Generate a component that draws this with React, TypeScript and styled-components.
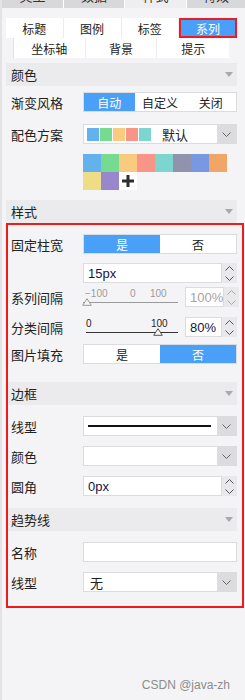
import styled, { createGlobalStyle } from 'styled-components';

const GlobalStyle = createGlobalStyle`
  html, body { margin: 0; padding: 0; background: #f4f4f6; }
  body {
    font-family: "Noto Sans CJK SC", "Liberation Sans", sans-serif;
    color: #222;
  }
`;

const BLUE = '#4a9ff9';

// Outer panel with the thin grey rail on the left
const Page = styled.div`
  width: 245px;
  height: 700px;
  box-sizing: border-box;
  border-left: 2px solid #e3e3e6;
  background: #f4f4f6;
  display: flex;
  flex-direction: column;
  overflow: hidden;
`;

// Top tab strip, only its bottom edge is visible
const TopTabs = styled.div`
  display: grid;
  grid-template-columns: 61px 60px 61px 1fr;
  gap: 1px;
  height: 8px;
  background: #fff;
`;

const TopTab = styled.div<{ $active?: boolean }>`
  background: ${p => (p.$active ? '#eeeef0' : '#d8d8da')};
  overflow: hidden;
  text-align: center;
  font-size: 13px;
  line-height: 13px;
  color: #333;
  & > span { display: block; margin-top: -11px; }
`;

const Body = styled.div`
  --indent: 5px;
  display: flex;
  flex-direction: column;
  padding: 0 8px 0 4px;
`;

const TabRow = styled.div<{ $cols: number; $mt?: number }>`
  display: grid;
  grid-template-columns: repeat(${p => p.$cols}, 1fr);
  height: 20px;
  background: #fff;
  margin-top: ${p => p.$mt ?? 0}px;
`;

const SubTabRow = styled(TabRow)`
  margin-left: 7px;
  margin-right: 8px;
  border-left: 1px solid #e2e2e4;
`;

const SubTab = styled.div<{ $active?: boolean }>`
  display: flex;
  align-items: center;
  justify-content: center;
  font-size: 12px;
  border-right: 1px solid #ececee;
  background: ${p => (p.$active ? BLUE : '#fff')};
  color: ${p => (p.$active ? '#fff' : '#222')};
  outline: ${p => (p.$active ? '2px solid #ee1c22' : 'none')};
  outline-offset: -2px;
  &:last-child { border-right: none; }
`;

const Header = styled.div<{ $mt?: number }>`
  display: flex;
  align-items: center;
  justify-content: space-between;
  height: 23px;
  margin-top: ${p => p.$mt ?? 0}px;
  padding: 0 4px 0 var(--indent);
  background: #ebebed;
  font-size: 13px;
`;

const Row = styled.div<{ $mt?: number }>`
  display: flex;
  align-items: center;
  height: 20px;
  margin-top: ${p => p.$mt ?? 0}px;
  padding-left: var(--indent);
`;

const Label = styled.div`
  width: 72px;
  flex: none;
  font-size: 13px;
`;

const Segmented = styled.div`
  flex: 1;
  display: flex;
  height: 20px;
  box-sizing: border-box;
  border: 1px solid #dcdcde;
  background: #fff;
`;

const Seg = styled.div<{ $active?: boolean }>`
  flex: 1;
  display: flex;
  align-items: center;
  justify-content: center;
  font-size: 12px;
  background: ${p => (p.$active ? BLUE : 'transparent')};
  color: ${p => (p.$active ? '#fff' : '#222')};
`;

const Select = styled.div`
  flex: 1;
  display: flex;
  height: 20px;
  box-sizing: border-box;
  border: 1px solid #dcdcde;
  background: #fff;
`;

const SelectValue = styled.div`
  flex: 1;
  display: flex;
  align-items: center;
  padding-left: 3px;
  font-size: 13px;
`;

const SelectButton = styled.div`
  width: 19px;
  flex: none;
  display: flex;
  align-items: center;
  justify-content: center;
  background: #dcdcdf;
`;

const Swatch = styled.span<{ $c: string }>`
  width: 12px;
  height: 13px;
  margin-right: 1px;
  background: ${p => p.$c};
`;

const OptionText = styled.span<{ $gap?: number }>`
  margin-left: ${p => p.$gap ?? 0}px;
`;

const LineSample = styled.div`
  flex: 1;
  height: 1.5px;
  margin: 0 6px 0 1px;
  background: #111;
`;

const NumberBox = styled.div<{ $width?: number }>`
  display: flex;
  height: 20px;
  ${p => (p.$width ? `width: ${p.$width}px; flex: none;` : 'flex: 1;')}
`;

const Field = styled.div<{ $disabled?: boolean }>`
  flex: 1;
  display: flex;
  align-items: center;
  height: 20px;
  box-sizing: border-box;
  border: 1px solid #dcdcde;
  background: #fff;
  padding-left: 4px;
  font-family: "Liberation Sans", sans-serif;
  font-size: 13px;
  color: ${p => (p.$disabled ? '#a4a4a4' : '#15153f')};
`;

const Spinner = styled.div`
  width: 15px;
  flex: none;
  display: flex;
  flex-direction: column;
  align-items: center;
  justify-content: space-between;
  padding: 3px 0 2px;
  box-sizing: border-box;
  background: #e9e9eb;
`;

const SwatchGrid = styled.div`
  display: grid;
  grid-template-columns: repeat(8, 18px);
  grid-auto-rows: 18px;
  margin: 10px 0 0 calc(var(--indent) + 72px);
`;

const GridCell = styled.div<{ $c: string }>`
  background: ${p => p.$c};
  display: flex;
  align-items: center;
  justify-content: center;
`;

// Red annotation frame round the style section
const Highlight = styled.div`
  --indent: 3px;
  display: flex;
  flex-direction: column;
  border: 2px solid #f01a1a;
  margin-right: -7px;
  padding: 0 5px 14px 0;
`;

const SliderBox = styled.div`
  position: relative;
  width: 95px;
  height: 20px;
  flex: none;
  margin-right: 7px;
`;

const Tick = styled.span<{ $disabled?: boolean }>`
  position: absolute;
  top: 2px;
  font-family: "Liberation Sans", sans-serif;
  font-size: 10px;
  line-height: 9px;
  color: ${p => (p.$disabled ? '#9a9a9a' : '#222')};
`;

const Track = styled.div<{ $disabled?: boolean; $start: number }>`
  position: absolute;
  left: ${p => p.$start}px;
  right: 0;
  top: 15px;
  height: 1px;
  background: ${p => (p.$disabled ? '#9a9a9a' : '#333')};
`;

const Thumb = styled.svg`
  position: absolute;
  top: 11px;
`;

const Watermark = styled.div`
  margin-top: 70px;
  padding-right: 7px;
  text-align: right;
  font-family: "Liberation Sans", sans-serif;
  font-size: 12px;
  color: #8c8c8c;
`;

const Chevron = ({ up, color = '#555' }: { up?: boolean; color?: string }) => (
  <svg width="9" height="5" viewBox="0 0 9 5">
    <polyline
      points={up ? '0.5,4.5 4.5,0.5 8.5,4.5' : '0.5,0.5 4.5,4.5 8.5,0.5'}
      fill="none"
      stroke={color}
      strokeWidth="1"
    />
  </svg>
);

const Caret = () => (
  <svg width="8" height="5" viewBox="0 0 8 5">
    <polygon points="0,0 8,0 4,5" fill="#a9a9ab" />
  </svg>
);

const Section = ({ title, mt }: { title: string; mt?: number }) => (
  <Header $mt={mt}>
    <span>{title}</span>
    <Caret />
  </Header>
);

const Dropdown = ({ children }: { children?: React.ReactNode }) => (
  <Select>
    <SelectValue>{children}</SelectValue>
    <SelectButton>
      <Chevron color="#666" />
    </SelectButton>
  </Select>
);

const NumberInput = ({ value, width, disabled }: { value: string; width?: number; disabled?: boolean }) => (
  <NumberBox $width={width}>
    <Field $disabled={disabled}>{value}</Field>
    <Spinner>
      <Chevron up color={disabled ? '#aaa' : '#555'} />
      <Chevron color={disabled ? '#aaa' : '#555'} />
    </Spinner>
  </NumberBox>
);

interface SliderProps {
  ticks: { text: string; left: number }[];
  thumb: number;
  start: number;
  disabled?: boolean;
}

const Slider = ({ ticks, thumb, start, disabled }: SliderProps) => (
  <SliderBox>
    {ticks.map(t => (
      <Tick key={t.text} $disabled={disabled} style={{ left: t.left }}>
        {t.text}
      </Tick>
    ))}
    <Track $disabled={disabled} $start={start} />
    <Thumb width="10" height="8" viewBox="0 0 10 8" style={{ left: thumb - 5 }}>
      <polygon points="5,0.7 9.3,7.3 0.7,7.3" fill="#f4f4f6" stroke={disabled ? '#9a9a9a' : '#555'} strokeWidth="1" />
    </Thumb>
  </SliderBox>
);

const palette = ['#63b2ee', '#76da91', '#f8cb7f', '#f89588', '#7cd6cf', '#9192ab', '#7898e1', '#efa666', '#eddd86', '#9987ce'];

export default function App() {
  return (
    <>
      <GlobalStyle />
      <Page>
        <TopTabs>
          <TopTab><span>类型</span></TopTab>
          <TopTab><span>数据</span></TopTab>
          <TopTab $active><span>样式</span></TopTab>
          <TopTab><span>特效</span></TopTab>
        </TopTabs>
        <Body>
          <TabRow $cols={4} $mt={10}>
            <SubTab>标题</SubTab>
            <SubTab>图例</SubTab>
            <SubTab>标签</SubTab>
            <SubTab $active>系列</SubTab>
          </TabRow>
          <SubTabRow $cols={3}>
            <SubTab>坐标轴</SubTab>
            <SubTab>背景</SubTab>
            <SubTab>提示</SubTab>
          </SubTabRow>

          <Section title="颜色" mt={5} />
          <Row $mt={6}>
            <Label>渐变风格</Label>
            <Segmented>
              <Seg $active>自动</Seg>
              <Seg>自定义</Seg>
              <Seg>关闭</Seg>
            </Segmented>
          </Row>
          <Row $mt={12}>
            <Label>配色方案</Label>
            <Dropdown>
              {palette.slice(0, 5).map(c => <Swatch key={c} $c={c} />)}
              <OptionText $gap={10}>默认</OptionText>
            </Dropdown>
          </Row>
          <SwatchGrid>
            {palette.map(c => <GridCell key={c} $c={c} />)}
            <GridCell $c="#fff">
              <svg width="12" height="12" viewBox="0 0 12 12">
                <rect x="0" y="4.5" width="12" height="3" fill="#2e2e2e" />
                <rect x="4.5" y="0" width="3" height="12" fill="#2e2e2e" />
              </svg>
            </GridCell>
          </SwatchGrid>

          <Section title="样式" mt={10} />
          <Highlight>
            <Row $mt={9}>
              <Label>固定柱宽</Label>
              <Segmented>
                <Seg $active>是</Seg>
                <Seg>否</Seg>
              </Segmented>
            </Row>
            <Row $mt={9}>
              <Label />
              <NumberInput value="15px" />
            </Row>
            <Row $mt={4}>
              <Label>系列间隔</Label>
              <Slider
                disabled
                start={0}
                thumb={4}
                ticks={[
                  { text: '−100', left: 2 },
                  { text: '0', left: 47 },
                  { text: '100', left: 67 },
                ]}
              />
              <NumberInput value="100%" width={52} disabled />
            </Row>
            <Row $mt={10}>
              <Label>分类间隔</Label>
              <Slider
                start={3}
                thumb={75}
                ticks={[
                  { text: '0', left: 3 },
                  { text: '100', left: 68 },
                ]}
              />
              <NumberInput value="80%" width={52} />
            </Row>
            <Row $mt={7}>
              <Label>图片填充</Label>
              <Segmented>
                <Seg>是</Seg>
                <Seg $active>否</Seg>
              </Segmented>
            </Row>

            <Section title="边框" mt={18} />
            <Row $mt={11}>
              <Label>线型</Label>
              <Dropdown>
                <LineSample />
              </Dropdown>
            </Row>
            <Row $mt={10}>
              <Label>颜色</Label>
              <Dropdown />
            </Row>
            <Row $mt={10}>
              <Label>圆角</Label>
              <NumberInput value="0px" />
            </Row>

            <Section title="趋势线" mt={12} />
            <Row $mt={11}>
              <Label>名称</Label>
              <Field />
            </Row>
            <Row $mt={10}>
              <Label>线型</Label>
              <Dropdown>
                <OptionText $gap={3}>无</OptionText>
              </Dropdown>
            </Row>
          </Highlight>

          <Watermark>CSDN @java-zh</Watermark>
        </Body>
      </Page>
    </>
  );
}
